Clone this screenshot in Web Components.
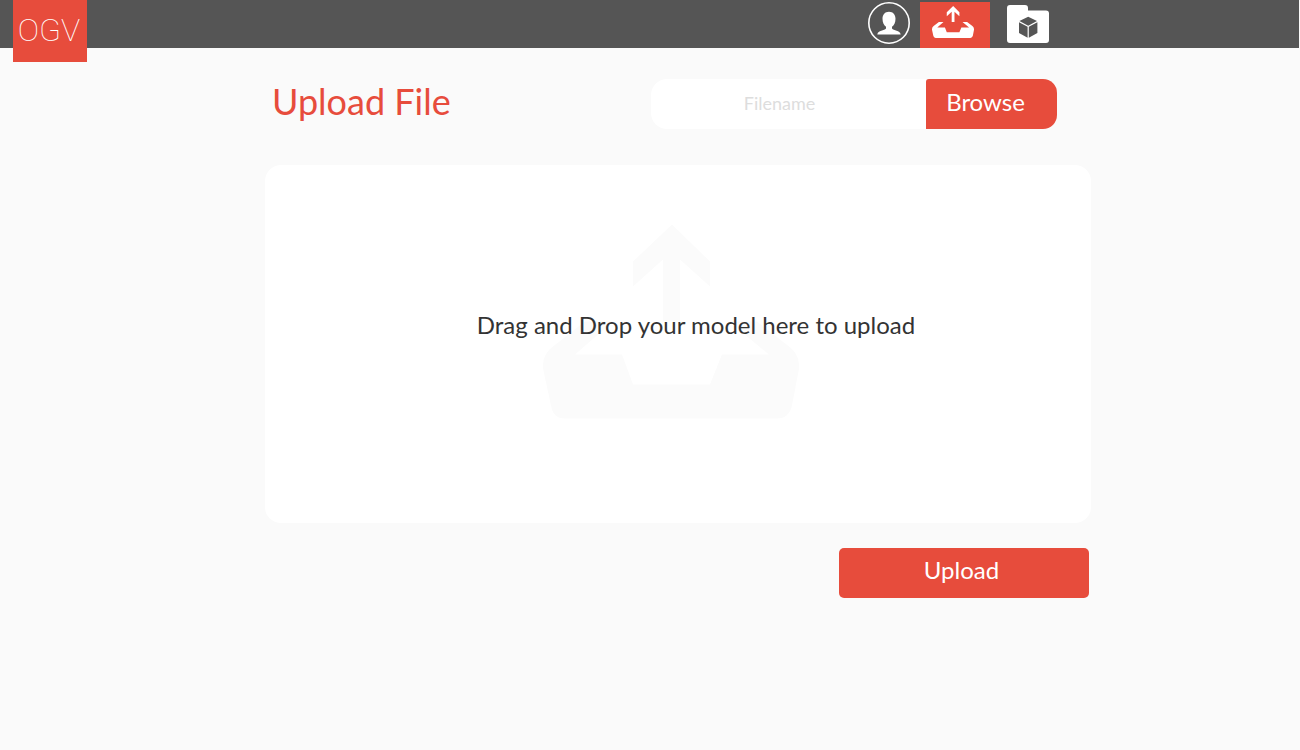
<!DOCTYPE html>
<html lang="en">
<head>
<meta charset="utf-8">
<meta name="viewport" content="width=device-width, initial-scale=1">
<title>OGV - Upload File</title>
<style>
  body { margin: 0; background: #fafafa; color: #333; font-family: Lato, sans-serif; --accent: #e74c3c; --bar: #555; }
</style>
</head>
<body>
<ogv-header>
  <ogv-nav-link href="#profile" label="Profile"><ogv-icon name="user"></ogv-icon></ogv-nav-link>
  <ogv-nav-link href="#upload" label="Upload" active><ogv-icon name="upload"></ogv-icon></ogv-nav-link>
  <ogv-nav-link href="#models" label="Models"><ogv-icon name="folder"></ogv-icon></ogv-nav-link>
</ogv-header>
<ogv-upload-page>
  <span slot="title">Upload File</span>
  <ogv-file-picker slot="picker">Browse</ogv-file-picker>
  <ogv-drop-zone>Drag and Drop your model here to upload</ogv-drop-zone>
  <ogv-button slot="action">Upload</ogv-button>
</ogv-upload-page>
<script>
const ICONS = {
  user: `<svg viewBox="0 0 42 42" width="42" height="42"><circle cx="21" cy="21" r="20.200" fill="none" stroke="#fff" stroke-width="1.600"/><path fill="#fff" d="M21 9.800c4 0 6.500 2.800 6.500 7 0 4-1.500 6.500-3.500 8v1.700c1.500 2.200 8 1.500 8.700 6H9.300c.7-4.500 7.200-3.800 8.700-6v-1.700c-2-1.500-3.500-4-3.500-8 0-4.200 2.500-7 6.500-7z"/></svg>`,
  upload: `<svg viewBox="0 0 256 194" width="42" height="32"><path fill="currentColor" d="M129 0 167 37V62L137 35V97H120V35L90 62V37ZM42 97H70L32 130H79L90 160H167L179 130H226L186 97H214L246 122Q257 130 256 144L249 181Q246 194 234 194H22Q10 194 8 181L0 144Q-1 130 10 122Z"/></svg>`,
  folder: `<svg viewBox="0 0 42 38" width="42" height="38"><path fill="#fff" d="M3 0H18Q21 0 21 3V5.500H39Q42 5.500 42 8.500V35Q42 38 39 38H3Q0 38 0 35V3Q0 0 3 0Z"/><path fill="#555" d="M21.200 11.800 30 16 21.200 20.800 12.400 16ZM12 17.200 20.600 21.800V32.800L12 28ZM30.400 17.200V28L21.800 32.800V21.800Z"/></svg>`
};

class Base extends HTMLElement {
  constructor() {
    super();
    this.attachShadow({ mode: "open" });
  }
  connectedCallback() { this.shadowRoot.innerHTML = this.render(); }
}

customElements.define("ogv-icon", class extends Base {
  render() {
    return `<style>:host{display:block;color:#fff} svg{display:block;width:100%;height:auto}</style>${ICONS[this.getAttribute("name")]}`;
  }
});

customElements.define("ogv-nav-link", class extends Base {
  render() {
    return `<style>
      :host{display:block}
      a{box-sizing:border-box;display:flex;justify-content:center;height:46px;color:#fff}
      :host([active]) a{width:70px;padding:4px 4px 0 0;background:var(--accent)}
      :host([label="Models"]) a{padding-top:3px}
      ::slotted(ogv-icon){width:42px}
    </style><a href="${this.getAttribute("href")}" aria-label="${this.getAttribute("label")}"><slot></slot></a>`;
  }
});

customElements.define("ogv-header", class extends Base {
  render() {
    return `<style>
      :host{display:block}
      header{display:flex;justify-content:space-between;align-items:flex-start;height:48px;margin-right:1px;padding:0 250px 0 13px;box-sizing:border-box;background:var(--bar)}
      .logo{box-sizing:border-box;display:block;width:74px;height:62px;padding-right:2px;background:var(--accent);color:#fff;font:100 32px/60px Roboto,sans-serif;text-align:center;text-decoration:none}
      nav{display:flex;padding-top:2px}
      ::slotted([label="Profile"]){margin-right:10px}
      ::slotted([label="Models"]){margin-left:17px}
    </style>
    <header><a class="logo" href="#home">OGV</a><nav aria-label="Main"><slot></slot></nav></header>`;
  }
});

customElements.define("ogv-file-picker", class extends Base {
  render() {
    return `<style>
      :host{display:flex;height:50px}
      input{box-sizing:border-box;width:275px;min-width:0;border:0;border-radius:16px 0 0 16px;padding:0 18px 2px 0;background:#fff;color:#333;font:18px Lato,sans-serif;text-align:center}
      input::placeholder{color:#ddd;opacity:1}
      button{width:131px;border:0;border-radius:3px 14px 14px 0;padding:0 12px 6px 0;background:var(--accent);color:#fff;font:24px Lato,sans-serif}
    </style>
    <input type="text" aria-label="Filename" placeholder="Filename"><button type="button"><slot></slot></button>`;
  }
});

customElements.define("ogv-drop-zone", class extends Base {
  render() {
    return `<style>
      :host{display:grid;justify-items:center;min-height:358px;border-radius:16px;background:#fff}
      ogv-icon,p{grid-area:1/1}
      ogv-icon{width:256px;margin:59px 14px 0 0;color:#fbfbfb}
      p{z-index:1;margin:144px 0 0 36px;font-size:24px;line-height:32px}
    </style>
    <ogv-icon name="upload"></ogv-icon><p><slot></slot></p>`;
  }
});

customElements.define("ogv-button", class extends Base {
  render() {
    return `<style>
      :host{display:block}
      button{width:250px;height:50px;border:0;border-radius:5px;padding:0 5px 8px 0;background:var(--accent);color:#fff;font:24px Lato,sans-serif}
    </style><button type="submit"><slot></slot></button>`;
  }
});

customElements.define("ogv-upload-page", class extends Base {
  render() {
    return `<style>
      :host{display:block;padding:31px 209px 32px 265px}
      .top{display:flex;justify-content:space-between;align-items:flex-start;gap:16px;padding:0 34px 0 7px;margin-bottom:36px}
      h1{margin:0;color:var(--accent);font-size:36px;line-height:44px;font-weight:400}
      .actions{display:flex;justify-content:flex-end;padding:25px 2px 0 0}
    </style>
    <main><div class="top"><h1><slot name="title"></slot></h1><slot name="picker"></slot></div>
    <slot></slot><div class="actions"><slot name="action"></slot></div></main>`;
  }
});
</script>
</body>
</html>
